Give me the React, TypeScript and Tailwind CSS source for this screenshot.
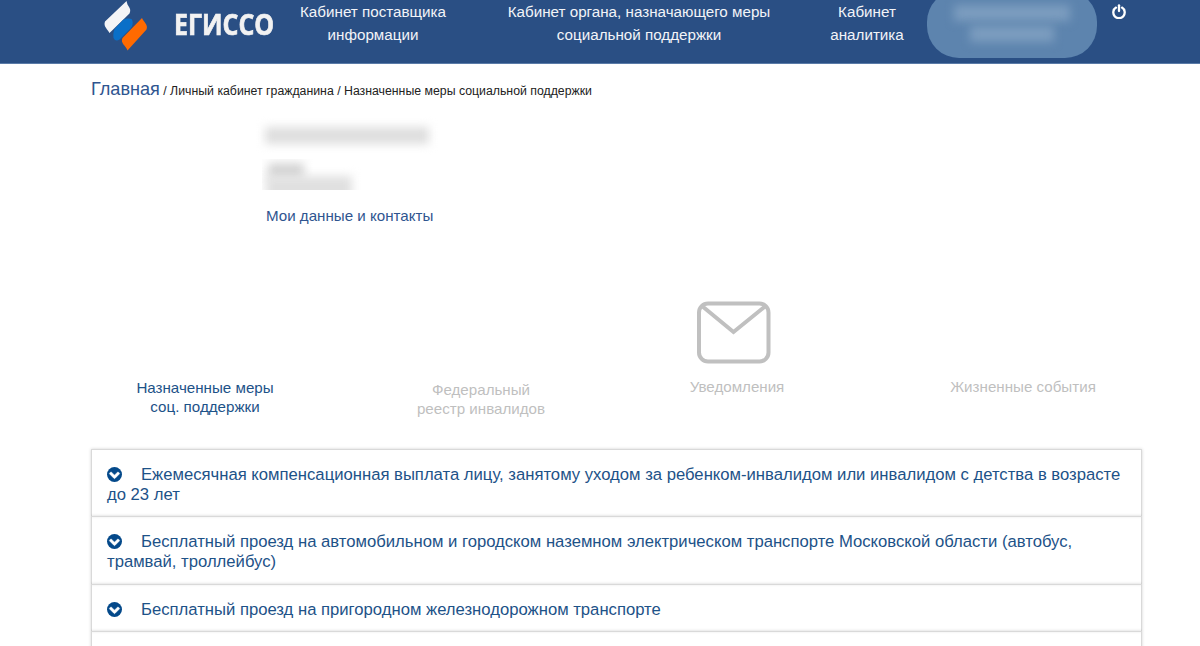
import React from "react";

const benefits = [
  "Ежемесячная компенсационная выплата лицу, занятому уходом за ребенком-инвалидом или инвалидом с детства в возрасте до 23 лет",
  "Бесплатный проезд на автомобильном и городском наземном электрическом транспорте Московской области (автобус, трамвай, троллейбус)",
  "Бесплатный проезд на пригородном железнодорожном транспорте",
];

function Logo() {
  return (
    <svg className="mt-px ml-[103px] h-[52px] w-[46px] shrink-0" viewBox="103 1 46 52">
      <path d="M126.500 1 L127.500 4.500 C129 7 131.500 9.500 129.500 13.500 L109.500 33 C108 29.500 103 26.500 105 21.500 L125 2.500 Z" fill="#f4f4f6" />
      <path d="M122.500 20.500 C125.500 18 130 18 132 19.500 C133.500 23 132.500 26 130.500 28.500 L119.500 39.500 C117 41.500 114 40.500 113.500 37.500 C113 33.500 113.500 30.500 115.500 28 Z" fill="#0a6fc8" />
      <path d="M142 18 C143.500 22 148.500 24.500 146.500 29.500 L127.500 50.500 C126 45.500 120 43.500 122.500 38 Z" fill="#ff6a00" />
    </svg>
  );
}

function PowerIcon() {
  return (
    <svg
      className="mt-[4px] ml-[15px] h-[15px] w-[14px] shrink-0"
      viewBox="0 0 14 15"
      fill="none"
      stroke="#fff"
      strokeWidth="2.3"
      strokeLinecap="round"
    >
      <path d="M4 3.600 A5.700 5.700 0 1 0 10 3.600" />
      <path d="M7 1.300 V7" />
    </svg>
  );
}

function ChevronBadge() {
  return (
    <svg className="mr-[19px] inline size-[15px] align-[-2px]" viewBox="0 128 1536 1536">
      <circle cx="768" cy="896" r="768" fill="#04498a" />
      <path
        fill="#fff"
        stroke="#fff"
        strokeWidth="50"
        d="M813 1299l454-454q19-19 19-45t-19-45l-102-102q-19-19-45-19t-45 19l-307 307-307-307q-19-19-45-19t-45 19l-102 102q-19 19-19 45t19 45l454 454q19 19 45 19t45-19z"
      />
    </svg>
  );
}

function Header() {
  return (
    <header className="flex h-16 items-start overflow-hidden border-b border-[#5a7ba8] bg-[#2a4f84] text-[15.2px] leading-[22.5px] text-[#f2f4f8]">
      <Logo />
      <div className="ml-[25px] w-[101px] shrink-0 pt-[6px]">
        <div className="w-max origin-left scale-x-[0.86] font-['Open_Sans',sans-serif] text-[29px] leading-[36px] font-bold text-[#f2f2f2] [-webkit-text-stroke:0.7px_#f2f2f2]">
          ЕГИССО
        </div>
      </div>
      <a className="ml-[18px] w-[160px] shrink-0 pt-px text-center">
        Кабинет поставщика
        <br />
        информации
      </a>
      <a className="ml-[46px] w-[280px] shrink-0 pt-px text-center">
        Кабинет органа, назначающего меры
        <br />
        социальной поддержки
      </a>
      <a className="ml-[38px] w-[100px] shrink-0 pt-px text-center">
        Кабинет
        <br />
        аналитика
      </a>
      <div className="-mt-[10px] ml-[10px] flex h-[68px] w-[170px] shrink-0 flex-col items-center rounded-[32px] bg-[#5d84ae] pt-[15px]">
        <div className="h-[16px] w-[116px] bg-[#7c9dbf] blur-[5px]" />
        <div className="mt-[5px] h-[16px] w-[84px] bg-[#7c9dbf] blur-[5px]" />
      </div>
      <PowerIcon />
    </header>
  );
}

function Tabs() {
  return (
    <nav className="mt-[74px] flex h-[120px] items-start text-[15.15px] leading-[19px] text-[#bfbfbf]">
      <a className="ml-[105px] w-[200px] pt-[78px] text-center text-[#1d5288]">
        Назначенные меры
        <br />
        соц. поддержки
      </a>
      <a className="ml-[76px] w-[200px] pt-[80px] text-center">
        Федеральный
        <br />
        реестр инвалидов
      </a>
      <a className="ml-[56px] flex w-[200px] flex-col items-center">
        <svg className="mt-px mr-[7px] h-[64px] w-[76px]" viewBox="0 0 76 64" fill="none" stroke="#c0c0c0" strokeWidth="4">
          <rect x="3" y="2.500" width="69.500" height="58" rx="9" />
          <path d="M6 5 L37.500 31 L69.500 5" />
        </svg>
        <span className="pt-[12px]">Уведомления</span>
      </a>
      <a className="ml-[86px] w-[200px] pt-[77px] text-center">Жизненные события</a>
    </nav>
  );
}

export default function App() {
  return (
    <div className="h-[646px] overflow-hidden bg-white font-['Liberation_Sans',Arial,sans-serif]">
      <Header />
      <div className="ml-[91px] flex h-[26px] items-baseline pt-[13px] text-[12.3px] leading-[24px] whitespace-pre text-[#222]">
        <a className="text-[18.1px] text-[#2f5590]">Главная</a>
        <span> / Личный кабинет гражданина / Назначенные меры социальной поддержки</span>
      </div>
      <section className="mt-[37px] ml-[262px] h-[99px]">
        <div className="ml-[3px] h-[17px] w-[164px] bg-[#dedede] blur-[5px]" />
        <div className="mt-[15px] h-[31px] w-[110px] overflow-hidden">
          <div className="mt-[4px] ml-[6px] h-[16px] w-[36px] bg-[#d4d4d4] blur-[5px]" />
          <div className="-mt-[3px] ml-[4px] h-[24px] w-[86px] bg-[#e0e0e0] blur-[5px]" />
        </div>
        <a className="mt-[16px] ml-[4px] block text-[15.15px] leading-[20px] text-[#2f5590]">Мои данные и контакты</a>
      </section>
      <Tabs />
      <main className="mt-[29px] ml-[91px] w-[1051px]">
        {benefits.map((title) => (
          <div
            key={title}
            className="border border-b-0 border-[#d9d9d9] px-[15px] pt-[15px] pb-[11.4px] text-[16.67px] leading-[20px] text-[#1d5288] shadow-[0_0_3px_rgba(0,0,0,0.18)]"
          >
            <ChevronBadge />
            {title}
          </div>
        ))}
        <div className="h-[48px] border border-[#d9d9d9] shadow-[0_0_3px_rgba(0,0,0,0.18)]" />
      </main>
    </div>
  );
}
